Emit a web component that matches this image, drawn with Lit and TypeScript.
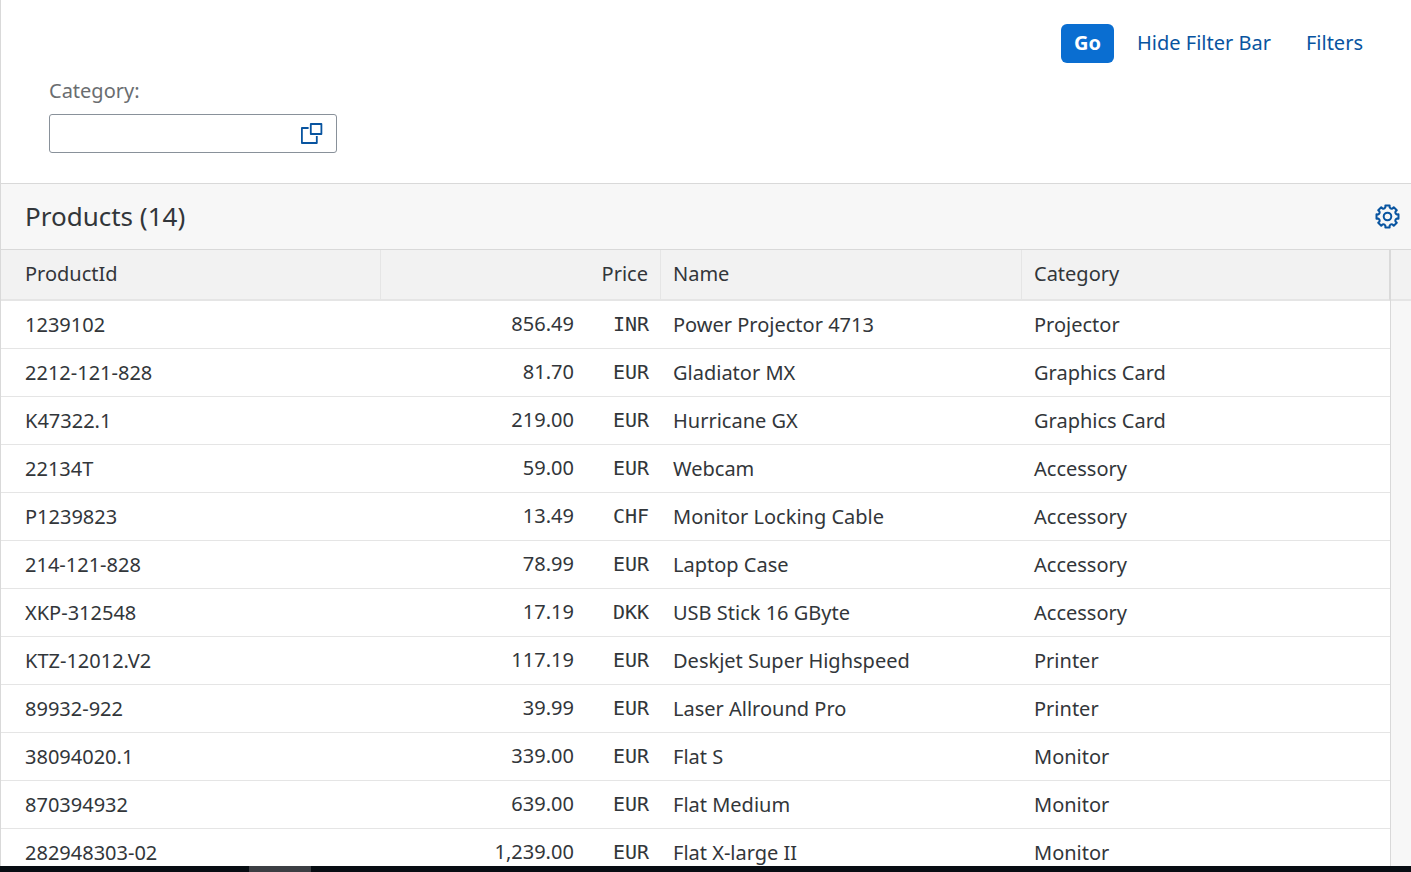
import { LitElement, html, css } from "lit";
import { customElement, property } from "lit/decorators.js";

interface Product {
  id: string;
  price: string;
  currency: string;
  name: string;
  category: string;
}

const row = (id: string, price: string, currency: string, name: string, category: string): Product => ({
  id, price, currency, name, category,
});

const PRODUCTS: Product[] = [
  row("1239102", "856.49", "INR", "Power Projector 4713", "Projector"),
  row("2212-121-828", "81.70", "EUR", "Gladiator MX", "Graphics Card"),
  row("K47322.1", "219.00", "EUR", "Hurricane GX", "Graphics Card"),
  row("22134T", "59.00", "EUR", "Webcam", "Accessory"),
  row("P1239823", "13.49", "CHF", "Monitor Locking Cable", "Accessory"),
  row("214-121-828", "78.99", "EUR", "Laptop Case", "Accessory"),
  row("XKP-312548", "17.19", "DKK", "USB Stick 16 GByte", "Accessory"),
  row("KTZ-12012.V2", "117.19", "EUR", "Deskjet Super Highspeed", "Printer"),
  row("89932-922", "39.99", "EUR", "Laser Allround Pro", "Printer"),
  row("38094020.1", "339.00", "EUR", "Flat S", "Monitor"),
  row("870394932", "639.00", "EUR", "Flat Medium", "Monitor"),
  row("282948303-02", "1,239.00", "EUR", "Flat X-large II", "Monitor"),
];

/** Outline of a cog: eight rounded teeth around a circle. */
function cogPath(): string {
  const points: string[] = [];
  const teeth = 8;
  const at = (radius: number, degrees: number) => {
    const a = (degrees * Math.PI) / 180;
    return `${(12.5 + radius * Math.sin(a)).toFixed(2)} ${(12.5 - radius * Math.cos(a)).toFixed(2)}`;
  };
  for (let i = 0; i < teeth; i++) {
    const c = (i * 360) / teeth;
    points.push(`${i ? "L" : "M"}${at(9.4, c - 13)}`);
    points.push(`L${at(11.2, c - 11)}`, `L${at(11.2, c + 11)}`, `L${at(9.4, c + 13)}`);
    points.push(`Q${at(8, c + 22.5)} ${at(9.4, c + 32)}`);
  }
  return points.join("") + "Z";
}

@customElement("filter-bar")
export class FilterBar extends LitElement {
  static styles = css`
    :host {
      display: block;
      padding: 24px 36px 30px 48px;
      background: #fff;
    }
    .actions {
      display: flex;
      justify-content: flex-end;
      gap: 11px;
    }
    .button {
      height: 39px;
      padding: 0 12px 2px;
      border: 0;
      border-radius: 6px;
      background: transparent;
      color: #0854a0;
      font: inherit;
      cursor: pointer;
    }
    .primary {
      min-width: 53px;
      background: #0a6ed1;
      color: #fff;
      font-weight: 700;
    }
    .field {
      display: flex;
      flex-direction: column;
      align-items: flex-start;
      gap: 9px;
      margin-top: 14px;
    }
    .label {
      color: #6a6d70;
      line-height: 28px;
    }
    .box {
      display: flex;
      box-sizing: border-box;
      width: 288px;
      height: 39px;
      border: 1px solid #89919a;
      border-radius: 3px;
      background: #fff;
    }
    .input {
      flex: 1;
      min-width: 0;
      padding: 0 12px;
      border: 0;
      outline: 0;
      background: transparent;
      color: #32363a;
      font: inherit;
    }
    .help {
      display: grid;
      place-items: center;
      width: 48px;
      padding: 0;
      border: 0;
      background: transparent;
      color: #0854a0;
      cursor: pointer;
    }
  `;

  render() {
    return html`
      <div class="actions">
        <button class="button primary">Go</button>
        <button class="button">Hide Filter Bar</button>
        <button class="button">Filters</button>
      </div>
      <div class="field">
        <label class="label" for="category">Category:</label>
        <div class="box">
          <input class="input" id="category" type="text" />
          <button class="help" aria-label="Value help">
            <svg width="22" height="22" viewBox="0 0 22 22" fill="none" stroke="currentColor" stroke-width="1.8" stroke-linejoin="round">
              <rect x="9.8" y="1" width="10.6" height="10" />
              <path d="M7.6 5H0.9V20H15.8V13" />
            </svg>
          </button>
        </div>
      </div>
    `;
  }
}

@customElement("product-table")
export class ProductTable extends LitElement {
  @property({ attribute: false }) products: Product[] = [];
  @property({ type: Number }) total = 0;

  static styles = css`
    :host {
      display: flex;
      flex-direction: column;
      min-height: 0;
      overflow: hidden;
      border-top: 1px solid #d9d9d9;
    }
    .toolbar {
      display: flex;
      flex: none;
      align-items: center;
      justify-content: space-between;
      height: 65px;
      padding: 0 11px 0 24px;
      border-bottom: 1px solid #d9d9d9;
      background: #f7f7f7;
    }
    .title {
      margin: 0;
      padding-bottom: 2px;
      font-size: 26px;
      font-weight: 400;
    }
    .settings {
      display: grid;
      padding: 0;
      border: 0;
      background: transparent;
      color: #0854a0;
      cursor: pointer;
    }
    .body {
      display: flex;
      flex: 1;
      min-height: 0;
    }
    .table {
      flex: 1;
      width: 100%;
      height: max-content;
      table-layout: fixed;
      border-collapse: separate;
      border-spacing: 0;
    }
    .col-id {
      width: 380px;
    }
    .col-price {
      width: 280px;
    }
    .col-name {
      width: 361px;
    }
    .head {
      box-sizing: border-box;
      height: 51px;
      padding: 0 12px 2px;
      border-right: 1px solid #e5e5e5;
      border-bottom: 2px solid #e5e5e5;
      background: #f2f2f2;
      font-weight: 400;
      text-align: left;
    }
    .head:last-child {
      border-right-color: #d9d9d9;
    }
    .cell {
      box-sizing: border-box;
      height: 48px;
      padding: 0 12px;
      border-bottom: 1px solid #e5e5e5;
      background: #fff;
      white-space: nowrap;
    }
    .first {
      padding-left: 24px;
    }
    .right {
      text-align: right;
    }
    .amount {
      display: flex;
      align-items: baseline;
      justify-content: flex-end;
      gap: 39px;
      padding-bottom: 2px;
    }
    .currency {
      font-family: "DejaVu Sans Mono", monospace;
    }
    .gutter {
      display: flex;
      flex: none;
      flex-direction: column;
      width: 20px;
      border-left: 1px solid #d9d9d9;
      background: #f7f7f7;
    }
    .gutter-head {
      box-sizing: border-box;
      height: 51px;
      border-bottom: 2px solid #e5e5e5;
      background: #f2f2f2;
    }
  `;

  render() {
    return html`
      <div class="toolbar">
        <h2 class="title">Products (${this.total})</h2>
        <button class="settings" aria-label="Settings">
          <svg width="25" height="25" viewBox="0 0 25 25" fill="none" stroke="currentColor" stroke-width="2" stroke-linejoin="round">
            <path d=${cogPath()} />
            <circle cx="12.5" cy="12.5" r="3.8" />
          </svg>
        </button>
      </div>
      <div class="body">
        <table class="table">
          <colgroup>
            <col class="col-id" />
            <col class="col-price" />
            <col class="col-name" />
            <col />
          </colgroup>
          <thead>
            <tr>
              <th class="head first" scope="col">ProductId</th>
              <th class="head right" scope="col">Price</th>
              <th class="head" scope="col">Name</th>
              <th class="head" scope="col">Category</th>
            </tr>
          </thead>
          <tbody>
            ${this.products.map(
              (p) => html`
                <tr>
                  <td class="cell first">${p.id}</td>
                  <td class="cell">
                    <div class="amount"><span>${p.price}</span><span class="currency">${p.currency}</span></div>
                  </td>
                  <td class="cell">${p.name}</td>
                  <td class="cell">${p.category}</td>
                </tr>
              `
            )}
          </tbody>
        </table>
        <div class="gutter"><div class="gutter-head"></div></div>
      </div>
    `;
  }
}

@customElement("app-root")
export class AppRoot extends LitElement {
  static styles = css`
    :host {
      display: flex;
      flex-direction: column;
      height: 100vh;
      overflow: hidden;
      background: #fff;
      color: #32363a;
      font-family: "Noto Sans", sans-serif;
      font-size: 20px;
      line-height: 28px;
    }
    .page {
      display: flex;
      flex: 1;
      flex-direction: column;
      min-height: 0;
      border-left: 1px solid #d9d9d9;
    }
    .products {
      flex: 1;
    }
    .taskbar {
      flex: none;
      height: 6px;
      padding-left: 249px;
      background: #080d13;
    }
    .task {
      width: 62px;
      height: 6px;
      background: #3c3e43;
    }
  `;

  render() {
    return html`
      <main class="page">
        <filter-bar></filter-bar>
        <product-table class="products" .products=${PRODUCTS} .total=${14}></product-table>
      </main>
      <div class="taskbar"><div class="task"></div></div>
    `;
  }
}
